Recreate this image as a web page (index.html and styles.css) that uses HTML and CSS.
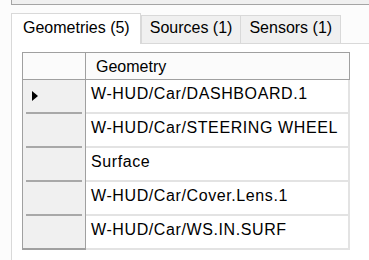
FILE: index.html
```html
<!DOCTYPE html>
<html lang="en">
<head>
    <meta charset="UTF-8">
    <meta name="viewport" content="width=device-width, initial-scale=1.0">
    <title>Geometries</title>
    <link rel="stylesheet" href="styles.css">
</head>
<body>
    <div class="top-box"></div>

    <div class="tabs">
        <div class="tab active">Geometries (5)</div>
        <div class="tab">Sources (1)</div>
        <div class="tab">Sensors (1)</div>
    </div>

    <div class="page">
        <div class="grid">
            <div class="row header">
                <div class="rh"></div>
                <div class="cell">Geometry</div>
            </div>
            <div class="row">
                <div class="rh"><span class="arrow"></span></div>
                <div class="cell">W-HUD/Car/DASHBOARD.1</div>
            </div>
            <div class="row">
                <div class="rh"></div>
                <div class="cell">W-HUD/Car/STEERING WHEEL</div>
            </div>
            <div class="row">
                <div class="rh"></div>
                <div class="cell">Surface</div>
            </div>
            <div class="row">
                <div class="rh"></div>
                <div class="cell">W-HUD/Car/Cover.Lens.1</div>
            </div>
            <div class="row last">
                <div class="rh"></div>
                <div class="cell">W-HUD/Car/WS.IN.SURF</div>
            </div>
        </div>
    </div>
</body>
</html>
```

FILE: styles.css
```css
* {
    margin: 0;
    padding: 0;
    box-sizing: border-box;
}

body {
    font-family: "Liberation Sans", Arial, sans-serif;
    font-size: 16px;
    line-height: 18px;
    color: #000;
    background: #fcfcfc;
    height: 260px;
    overflow: hidden;
}

.top-box {
    height: 5px;
    margin-left: 11px;
    background: #f0f0f0;
    border-left: 1px solid #a5a5a5;
    border-bottom: 1px solid #a5a5a5;
}

/* tab strip */
.tabs {
    display: flex;
    align-items: flex-end;
    height: 31px;
    margin-top: 8px;
    margin-left: 11px;
    border-bottom: 1px solid #d9d9d9;
}

.tab {
    height: 28px;
    padding: 3px 8px 0 8px;
    background: #f0f0f0;
    border: 1px solid #d9d9d9;
    border-bottom: none;
    margin-left: -1px;
    white-space: nowrap;
}

.tab.active {
    height: 31px;
    margin-left: 0;
    margin-right: 1px;
    margin-bottom: -1px;
    padding: 5px 10px 0 11px;
    background: #fff;
    position: relative;
}

.page {
    margin-left: 11px;
    height: 220px;
    padding: 8px 0 0 10px;
    background: #fff;
    border-left: 1px solid #d9d9d9;
}

/* data grid */
.grid {
    width: 328px;
}

.row {
    display: flex;
    height: 34px;
}

.rh {
    width: 64px;
    display: flex;
    align-items: center;
    padding: 0 0 2px 9px;
    background: #f0f0f0;
    border-left: 1px solid #a0a0a0;
    border-right: 1px solid #a0a0a0;
    position: relative;
}

.rh::after {
    content: "";
    position: absolute;
    left: 3px;
    right: 3px;
    bottom: 0;
    height: 2px;
    background: #a8a8a8;
}

.cell {
    flex: 1;
    padding: 5px 0 0 5px;
    letter-spacing: 0.6px;
    border-right: 2px solid #e3e3e3;
    border-bottom: 2px solid #e3e3e3;
    white-space: nowrap;
}

.row.header {
    height: 28px;
    border-top: 1px solid #a0a0a0;
}

.row.header .rh,
.row.header .cell {
    background: #fbfbfb;
    border-bottom: 1px solid #a0a0a0;
}

.row.header .rh::after {
    display: none;
}

.row.header .cell {
    padding: 5px 0 0 10px;
    letter-spacing: 0;
    border-right: 1px solid #a0a0a0;
}

.row.last .rh {
    border-bottom: 2px solid #a0a0a0;
}

.row.last .rh::after {
    display: none;
}

.arrow {
    flex-shrink: 0;
    width: 0;
    height: 0;
    border-left: 6px solid #000;
    border-top: 5px solid transparent;
    border-bottom: 5px solid transparent;
}
```
